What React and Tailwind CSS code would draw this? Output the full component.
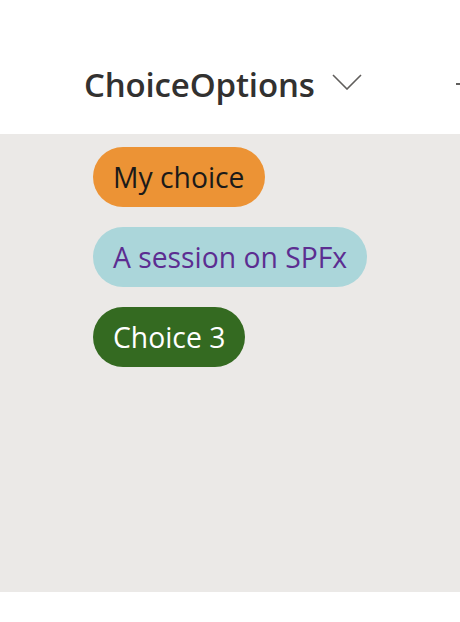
const choices = [
  { label: 'My choice', className: 'bg-[#ec9335] text-[#1b1a19]' },
  { label: 'A session on SPFx', className: 'bg-[#abd6da] text-[#5c2d91]' },
  { label: 'Choice 3', className: 'bg-[#346a21] text-white' },
];

const App = () => {
  return (
    <div className="w-[460px] h-[622px] bg-white overflow-hidden font-['Open_Sans',sans-serif]">
      {/* Column header */}
      <div className="h-[134px] flex items-start pt-[68px] pl-[84px] relative">
        <span className="text-[33px] font-semibold text-[#323130] leading-none tracking-[-0.15px]">
          ChoiceOptions
        </span>
        <svg className="ml-[17px] mt-[6px]" width="30" height="16" viewBox="0 0 30 16" fill="none">
          <path d="M1 1 L15 15 L29 1" stroke="#605e5c" strokeWidth="1.6" />
        </svg>
        <span className="absolute left-[456px] top-[83px] w-[6px] h-[2px] bg-[#605e5c]" />
      </div>

      {/* Cell */}
      <div className="h-[458px] bg-[#ebe9e7] pt-[13px] pl-[93px] flex flex-col items-start gap-[20px]">
        {choices.map((c) => (
          <div
            key={c.label}
            className={`h-[60px] px-[20px] rounded-full flex items-center text-[28.3px] leading-none ${c.className}`}
          >
            {c.label}
          </div>
        ))}
      </div>
    </div>
  );
};

export default App;
